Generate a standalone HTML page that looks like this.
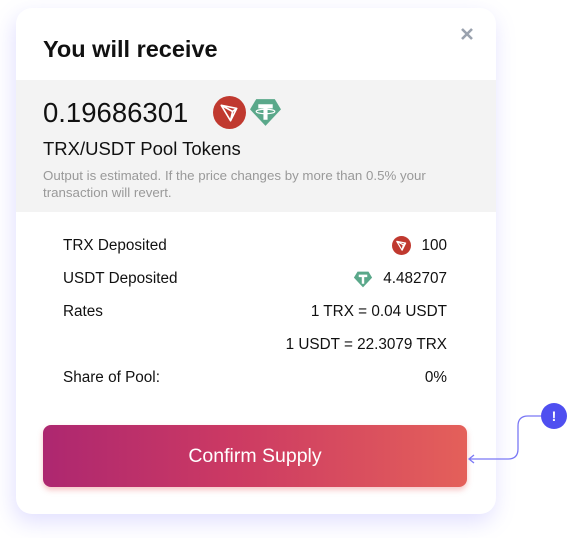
<!DOCTYPE html>
<html><head><meta charset="utf-8"><style>
*{margin:0;padding:0;box-sizing:border-box}
body{width:567px;height:538px;background:#fff;position:relative;overflow:hidden;font-family:"Liberation Sans",Arial,sans-serif;color:#111}
.card{position:absolute;left:16px;top:8px;width:480px;height:506px;background:#fff;border-radius:16px;box-shadow:-2px 8px 22px rgba(120,110,255,0.22);overflow:hidden}
.title{position:absolute;left:27px;top:28px;font-size:23.5px;font-weight:bold}
.close{position:absolute;left:444px;top:19px;width:14px;height:14px}
.band{position:absolute;left:0;top:72px;width:480px;height:132px;background:#f3f3f3}
.big{position:absolute;left:27px;top:89px;font-size:27.5px}
.pool{position:absolute;left:27px;top:130px;font-size:18.5px}
.note{position:absolute;left:27px;top:159px;font-size:13.3px;color:#999;line-height:17px;width:430px}
.row{position:absolute;left:47px;width:384px;font-size:15.3px;display:flex;justify-content:space-between;align-items:center}
.btn{position:absolute;left:27px;top:417px;width:424px;height:62px;border-radius:8px;background:linear-gradient(90deg,#ad2770,#cc3a63 45%,#e4605a);color:#fff;font-size:19.5px;display:flex;align-items:center;justify-content:center;box-shadow:0 3px 6px rgba(230,90,90,0.35)}
</style></head><body>
<div class="card">
<div class="title">You will receive</div>
<svg class="close" viewBox="0 0 14 14"><path d="M2 2L12 12M12 2L2 12" stroke="#9aa2ae" stroke-width="2.6"/></svg>
<div class="band"></div>
<div class="big">0.19686301</div>
<svg style="position:absolute;left:197px;top:88px" width="33" height="33" viewBox="0 0 32 32"><circle cx="16" cy="16" r="16" fill="#c0392f"/><path d="M8 9L23 12L17 24Z M8 9L17 24 M8 9L19 15L23 12 M19 15L17 24" fill="none" stroke="#fff" stroke-width="1.6" stroke-linejoin="round"/></svg>
<svg style="position:absolute;left:233px;top:90px" width="33" height="29" viewBox="0 0 32 28"><path d="M7 1H25L31 11L16 27L1 11Z" fill="#5aa88a"/><path d="M9 6H23V10H18V21H14V10H9Z" fill="#fff"/><ellipse cx="16" cy="13" rx="9" ry="2.2" fill="none" stroke="#fff" stroke-width="1.2"/></svg>
<div class="pool">TRX/USDT Pool Tokens</div>
<div class="note">Output is estimated. If the price changes by more than 0.5% your transaction will revert.</div>
<div class="row" style="top:228px"><span>TRX Deposited</span><span style="display:flex;align-items:center;gap:10px"><svg width="19" height="19" viewBox="0 0 32 32"><circle cx="16" cy="16" r="16" fill="#c0392f"/><path d="M8 9L23 12L17 24Z M8 9L19 15L23 12 M19 15L17 24" fill="none" stroke="#fff" stroke-width="2" stroke-linejoin="round"/></svg>100</span></div>
<div class="row" style="top:262px"><span>USDT Deposited</span><span style="display:flex;align-items:center;gap:10px"><svg width="20" height="17" viewBox="0 0 32 28"><path d="M7 1H25L31 11L16 27L1 11Z" fill="#5aa88a"/><path d="M9 6H23V10H18V21H14V10H9Z" fill="#fff"/></svg>4.482707</span></div>
<div class="row" style="top:295px"><span>Rates</span><span>1 TRX = 0.04 USDT</span></div>
<div class="row" style="top:328px"><span></span><span>1 USDT = 22.3079 TRX</span></div>
<div class="row" style="top:361px"><span>Share of Pool:</span><span>0%</span></div>
<div class="btn">Confirm Supply</div>
</div>
<svg style="position:absolute;left:0;top:0" width="567" height="538"><path d="M541 416H528Q518 416 518 426V449Q518 459 508 459H469M474 455L469 459L474 463" fill="none" stroke="#7a78f5" stroke-width="1.3"/><circle cx="554" cy="416" r="13" fill="#4f4ff0"/><text x="554" y="421" font-size="14" font-weight="bold" fill="#fff" text-anchor="middle" font-family="Liberation Sans">!</text></svg>
</body></html>
